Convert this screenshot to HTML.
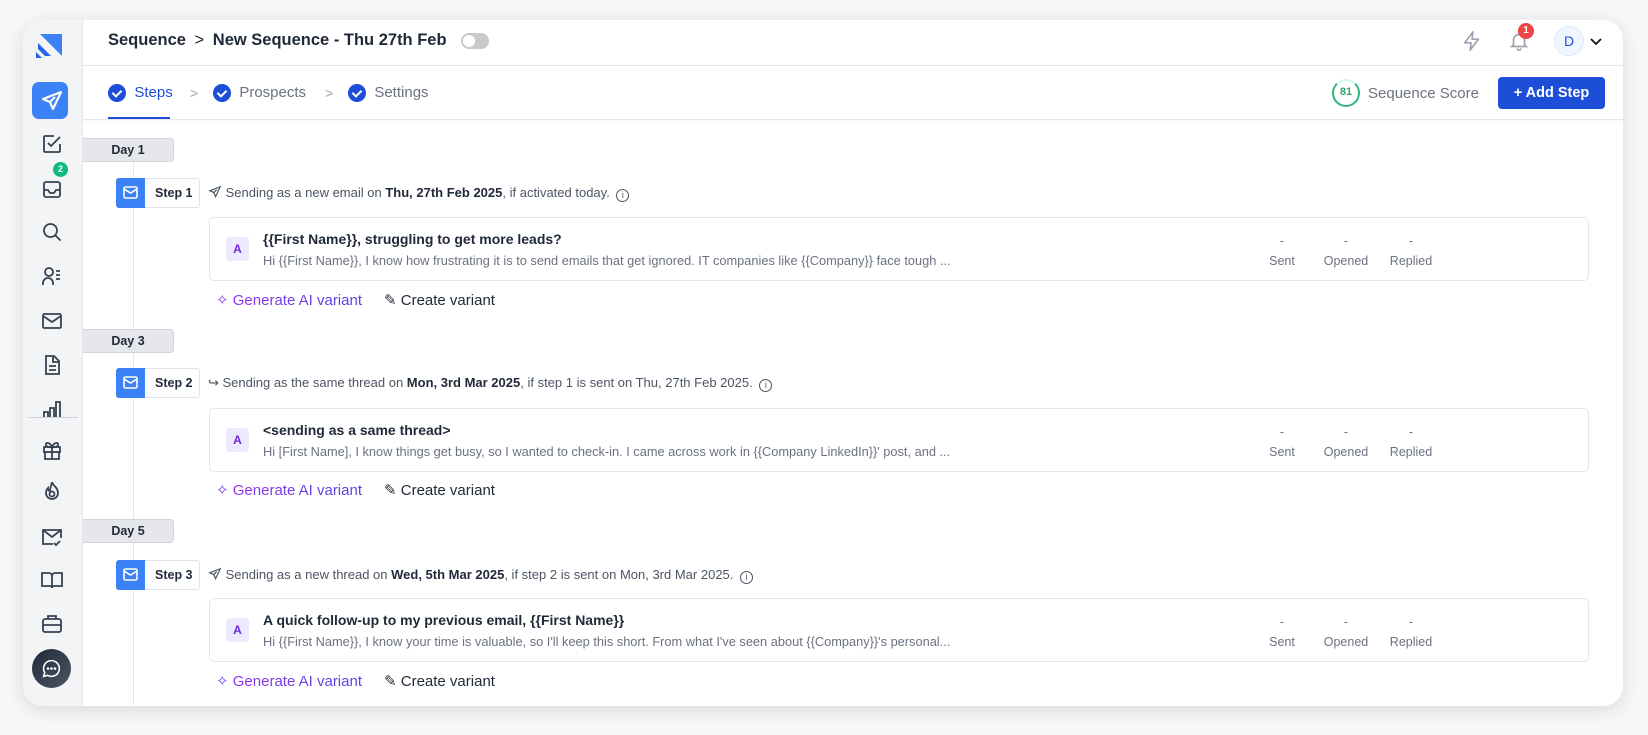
<!DOCTYPE html>
<html><head><meta charset="utf-8"><style>
*{box-sizing:border-box;margin:0;padding:0}
body{width:1648px;height:735px;background:#f7f7f8;font-family:"Liberation Sans",sans-serif;position:relative;overflow:hidden;color:#1f2937}
.win{position:absolute;left:23px;top:20px;width:1600px;height:686px;background:#fff;border-radius:20px;box-shadow:0 4px 18px rgba(0,0,0,.12);overflow:hidden}
.side{position:absolute;left:0;top:0;width:60px;height:100%;background:#f3f4f6;border-right:1px solid #e5e7eb}
.ico{position:absolute;left:17px;width:24px;height:24px}
.abs{position:absolute}
.hdr{position:absolute;left:60px;right:0;top:0;height:46px;border-bottom:1px solid #e5e7eb}
.tabs{position:absolute;left:60px;right:0;top:46px;height:54px;border-bottom:1px solid #e5e7eb;box-shadow:0 2px 4px rgba(0,0,0,.04)}
.chk{display:inline-block;width:18px;height:18px;border-radius:50%;background:#1d4ed8;vertical-align:middle;position:relative}
.chk:after{content:"";position:absolute;left:6px;top:4px;width:4px;height:7px;border:solid #fff;border-width:0 2px 2px 0;transform:rotate(45deg)}
.day{position:absolute;left:60px;width:91px;height:24px;background:#e5e7eb;border:1px solid #d1d5db;border-left:none;border-radius:0 4px 4px 0;font-size:12.5px;font-weight:bold;text-align:center;line-height:22px;color:#1f2937}
.chip{position:absolute;left:93px;height:30px;width:84px;border:1px solid #dbe3ef;border-radius:3px;background:#fff;font-size:12.5px;font-weight:bold;line-height:28px;padding-left:38px;color:#1f2937}
.chip .m{position:absolute;left:-1px;top:-1px;width:29px;height:30px;background:#3b82f6;border-radius:3px 0 0 3px}
.meta{position:absolute;left:185px;font-size:13px;color:#4b5563;line-height:16px}
.meta b{color:#1f2937}
.inf{display:inline-block;width:13px;height:13px;border:1.3px solid #4b5563;border-radius:50%;font-size:9px;text-align:center;line-height:11px;vertical-align:-1px;margin-left:3px}
.card{position:absolute;left:186px;width:1380px;height:64px;border:1px solid #e5e7eb;border-radius:5px;background:#fff}
.av{position:absolute;left:16px;top:19px;width:23px;height:24px;background:#ede9fe;border-radius:4px;color:#6d28d9;font-size:12px;font-weight:bold;text-align:center;line-height:24px}
.tt{position:absolute;left:53px;top:13px;font-size:14px;font-weight:bold;color:#1f2937}
.pv{position:absolute;left:53px;top:35px;font-size:12.8px;color:#6b7280}
.st{position:absolute;top:13px;width:70px;text-align:center;font-size:12.5px;color:#6b7280;line-height:20px}
.gen{position:absolute;left:193px;font-size:15px;line-height:18px}
.gen .g{background:linear-gradient(90deg,#9333ea,#4f46e5);-webkit-background-clip:text;color:transparent}
.gen .c{color:#1f2937;margin-left:22px}
</style></head><body>
<div class="win">
<div class="side">
 <svg class="abs" style="left:13px;top:10px" width="30" height="30" viewBox="0 0 30 30"><path d="M4 4h22v22z" fill="#3b82f6"/><path d="M2 13l13 13H9L2 19z" fill="#2563eb"/><path d="M0 22l6 6H0z" fill="#2563eb"/></svg>
 <div class="abs" style="left:9px;top:62px;width:36px;height:37px;background:#3b82f6;border-radius:7px"></div>
 <svg class="ico" style="top:69px" viewBox="0 0 24 24" fill="none" stroke="#fff" stroke-width="2.2" stroke-linejoin="round"><path d="M21 3L3 10l7 3 3 7z"/><path d="M10 13l5-5"/></svg>
 <svg class="ico" style="top:112px" viewBox="0 0 24 24" fill="none" stroke="#374151" stroke-width="1.8"><path d="M20 12v7a1 1 0 0 1-1 1H5a1 1 0 0 1-1-1V5a1 1 0 0 1 1-1h9"/><path d="M8 11l3 3 9-9"/></svg>
 <svg class="ico" style="top:157px" viewBox="0 0 24 24" fill="none" stroke="#374151" stroke-width="1.8"><rect x="4" y="5" width="16" height="15" rx="2"/><path d="M4 13h4l2 3h4l2-3h4"/></svg>
 <div class="abs" style="left:30px;top:142px;width:15px;height:15px;border-radius:50%;background:#10b981;color:#fff;font-size:9px;font-weight:bold;text-align:center;line-height:15px">2</div>
 <svg class="ico" style="top:200px" viewBox="0 0 24 24" fill="none" stroke="#374151" stroke-width="1.8"><circle cx="10.5" cy="10.5" r="6.5"/><path d="M15.5 15.5l5 5"/></svg>
 <svg class="ico" style="top:244px" viewBox="0 0 24 24" fill="none" stroke="#374151" stroke-width="1.8"><circle cx="9" cy="8" r="4"/><path d="M3 21v-2a5 5 0 0 1 10 0v2M16 7h4M16 11h4M16 15h4"/></svg>
 <svg class="ico" style="top:289px" viewBox="0 0 24 24" fill="none" stroke="#374151" stroke-width="1.8"><rect x="3" y="5" width="18" height="14" rx="1.5"/><path d="M3 7l9 6 9-6"/></svg>
 <svg class="ico" style="top:333px" viewBox="0 0 24 24" fill="none" stroke="#374151" stroke-width="1.8"><path d="M6 3h8l5 5v13H6z"/><path d="M13 3v6h6M9 13h7M9 17h7"/></svg>
 <svg class="ico" style="top:377px" viewBox="0 0 24 24" fill="none" stroke="#374151" stroke-width="1.8"><path d="M4 21v-6h4v6M10 21V11h4v10M16 21V5h4v16"/></svg>
 <div class="abs" style="left:5px;top:397px;width:50px;height:1px;background:#d1d5db"></div>
 <svg class="ico" style="top:418px" viewBox="0 0 24 24" fill="none" stroke="#374151" stroke-width="1.8"><rect x="4" y="9" width="16" height="5"/><path d="M5 14v7h14v-7M12 9v12M12 9c-2-5-7-5-6-2s6 2 6 2c2-5 7-5 6-2s-6 2-6 2"/></svg>
 <svg class="ico" style="top:459px" viewBox="0 0 24 24" fill="none" stroke="#374151" stroke-width="1.8"><path d="M12 3c0 3 6 5 6 11a6 6 0 0 1-12 0c0-3 2-5 2-5 0 2 1 3 2 3 0-4 2-7 2-9z"/><circle cx="12" cy="15" r="2.5"/></svg>
 <svg class="ico" style="top:505px" viewBox="0 0 24 24" fill="none" stroke="#374151" stroke-width="1.8"><path d="M13 19H3V5h18v8"/><path d="M3 5l9 7 9-7M14 18l2 2 4-4"/></svg>
 <svg class="ico" style="top:548px" viewBox="0 0 24 24" fill="none" stroke="#374151" stroke-width="1.8"><path d="M2 5h7a3 3 0 0 1 3 3v12a2 2 0 0 0-2-2H2zM22 5h-7a3 3 0 0 0-3 3v12a2 2 0 0 1 2-2h8z"/></svg>
 <svg class="ico" style="top:592px" viewBox="0 0 24 24" fill="none" stroke="#374151" stroke-width="1.8"><rect x="3" y="7" width="18" height="13" rx="2"/><path d="M8 7V4h8v3M3 13h18"/></svg>
 <div class="abs" style="left:9px;top:629px;width:39px;height:39px;border-radius:50%;background:linear-gradient(135deg,#1f2937,#4b5563)"></div>
 <svg class="abs" style="left:18px;top:638px" width="21" height="21" viewBox="0 0 24 24" fill="none" stroke="#fff" stroke-width="1.8"><path d="M12 3a9 9 0 1 1-4.5 16.8L3 21l1.3-4.3A9 9 0 0 1 12 3z"/><circle cx="8" cy="12" r=".6" fill="#fff"/><circle cx="12" cy="12" r=".6" fill="#fff"/><circle cx="16" cy="12" r=".6" fill="#fff"/></svg>
</div>

<div class="hdr">
 <div class="abs" style="left:25px;top:11px;font-size:16.5px;color:#1f2937;font-weight:bold"><span>Sequence</span> <span style="font-weight:normal;margin:0 4px">&gt;</span> New Sequence - Thu 27th Feb</div>
 <div class="abs" style="left:378px;top:13px;width:28px;height:16px;border-radius:8px;background:#c7c9cd"></div>
 <div class="abs" style="left:380px;top:15px;width:12px;height:12px;border-radius:50%;background:#fff"></div>
 <svg class="abs" style="left:1378px;top:10px" width="22" height="22" viewBox="0 0 24 24" fill="none" stroke="#9ca3af" stroke-width="1.8" stroke-linejoin="round"><path d="M13 2L4 14h7l-1 8 9-12h-7z"/></svg>
 <svg class="abs" style="left:1425px;top:10px" width="22" height="22" viewBox="0 0 24 24" fill="none" stroke="#9ca3af" stroke-width="1.8"><path d="M6 16V11a6 6 0 0 1 12 0v5l2 2H4z"/><path d="M10 20a2 2 0 0 0 4 0"/></svg>
 <div class="abs" style="left:1435px;top:3px;width:16px;height:16px;border-radius:50%;background:#ef4444;color:#fff;font-size:10px;font-weight:bold;text-align:center;line-height:16px">1</div>
 <div class="abs" style="left:1471px;top:6px;width:30px;height:30px;border-radius:50%;background:#eff6ff;border:1px solid #dbeafe;color:#1d4ed8;font-size:14px;text-align:center;line-height:28px">D</div>
 <svg class="abs" style="left:1505px;top:13px" width="16" height="16" viewBox="0 0 16 16" fill="none" stroke="#111" stroke-width="1.8"><path d="M3 6l5 5 5-5"/></svg>
</div>

<div class="tabs">
 <div class="abs" style="left:25px;top:18px;font-size:15px;color:#1d4ed8"><span class="chk"></span>&nbsp; Steps</div>
 <div class="abs" style="left:25px;top:51px;width:62px;height:2px;background:#1d4ed8"></div>
 <div class="abs" style="left:107px;top:19px;font-size:14px;color:#9ca3af">&gt;</div>
 <div class="abs" style="left:130px;top:18px;font-size:15px;color:#6b7280"><span class="chk"></span>&nbsp; Prospects</div>
 <div class="abs" style="left:242px;top:19px;font-size:14px;color:#9ca3af">&gt;</div>
 <div class="abs" style="left:265px;top:18px;font-size:15px;color:#6b7280"><span class="chk"></span>&nbsp; Settings</div>
 <div class="abs" style="left:1249px;top:13px;width:28px;height:28px;border-radius:50%;border:2.5px solid #34b27b;border-top-color:#d1fae5;color:#34a06f;font-size:11px;font-weight:bold;text-align:center;line-height:23px">81</div>
 <div class="abs" style="left:1285px;top:19px;font-size:15px;color:#6b7280">Sequence Score</div>
 <div class="abs" style="left:1415px;top:11px;width:107px;height:32px;border-radius:4px;background:#1d4ed8;color:#fff;font-size:14.5px;font-weight:bold;text-align:center;line-height:32px">+ Add Step</div>
</div>

<div class="abs" style="left:110px;top:142px;width:1px;height:544px;background:#e5e7eb"></div>

<!-- step 1 -->
<div class="day" style="top:118px">Day 1</div>
<div class="chip" style="top:158px"><div class="m"><svg style="margin:8px 0 0 7px;display:block" width="15" height="13" viewBox="0 0 15 13" fill="none" stroke="#fff" stroke-width="1.6"><rect x="1" y="1" width="13" height="11" rx="1.5"/><path d="M1 3l6.5 4L14 3"/></svg></div>Step 1</div>
<div class="meta" style="top:165px"><svg width="14" height="14" viewBox="0 0 24 24" fill="none" stroke="#4b5563" stroke-width="2" style="vertical-align:-2px"><path d="M21 3L3 10l7 3 3 7z"/><path d="M10 13l5-5"/></svg> Sending as a new email on <b>Thu, 27th Feb 2025</b>, if activated today. <span class="inf">i</span></div>
<div class="card" style="top:197px"><div class="av">A</div><div class="tt">{{First Name}}, struggling to get more leads?</div><div class="pv">Hi {{First Name}}, I know how frustrating it is to send emails that get ignored. IT companies like {{Company}} face tough ...</div>
<div class="st" style="left:1037px">-<br>Sent</div><div class="st" style="left:1101px">-<br>Opened</div><div class="st" style="left:1166px">-<br>Replied</div></div>
<div class="gen" style="top:272px"><span style="color:#7c3aed">✧</span> <span class="g">Generate AI variant</span><span class="c">✎ Create variant</span></div>

<!-- step 2 -->
<div class="day" style="top:309px">Day 3</div>
<div class="chip" style="top:348px"><div class="m"><svg style="margin:8px 0 0 7px;display:block" width="15" height="13" viewBox="0 0 15 13" fill="none" stroke="#fff" stroke-width="1.6"><rect x="1" y="1" width="13" height="11" rx="1.5"/><path d="M1 3l6.5 4L14 3"/></svg></div>Step 2</div>
<div class="meta" style="top:355px">↪ Sending as the same thread on <b>Mon, 3rd Mar 2025</b>, if step 1 is sent on Thu, 27th Feb 2025. <span class="inf">i</span></div>
<div class="card" style="top:388px"><div class="av">A</div><div class="tt">&lt;sending as a same thread&gt;</div><div class="pv">Hi [First Name], I know things get busy, so I wanted to check-in. I came across work in {{Company LinkedIn}}' post, and ...</div>
<div class="st" style="left:1037px">-<br>Sent</div><div class="st" style="left:1101px">-<br>Opened</div><div class="st" style="left:1166px">-<br>Replied</div></div>
<div class="gen" style="top:462px"><span style="color:#7c3aed">✧</span> <span class="g">Generate AI variant</span><span class="c">✎ Create variant</span></div>

<!-- step 3 -->
<div class="day" style="top:499px">Day 5</div>
<div class="chip" style="top:540px"><div class="m"><svg style="margin:8px 0 0 7px;display:block" width="15" height="13" viewBox="0 0 15 13" fill="none" stroke="#fff" stroke-width="1.6"><rect x="1" y="1" width="13" height="11" rx="1.5"/><path d="M1 3l6.5 4L14 3"/></svg></div>Step 3</div>
<div class="meta" style="top:547px"><svg width="14" height="14" viewBox="0 0 24 24" fill="none" stroke="#4b5563" stroke-width="2" style="vertical-align:-2px"><path d="M21 3L3 10l7 3 3 7z"/><path d="M10 13l5-5"/></svg> Sending as a new thread on <b>Wed, 5th Mar 2025</b>, if step 2 is sent on Mon, 3rd Mar 2025. <span class="inf">i</span></div>
<div class="card" style="top:578px"><div class="av">A</div><div class="tt">A quick follow-up to my previous email, {{First Name}}</div><div class="pv">Hi {{First Name}}, I know your time is valuable, so I'll keep this short. From what I've seen about {{Company}}'s personal...</div>
<div class="st" style="left:1037px">-<br>Sent</div><div class="st" style="left:1101px">-<br>Opened</div><div class="st" style="left:1166px">-<br>Replied</div></div>
<div class="gen" style="top:653px"><span style="color:#7c3aed">✧</span> <span class="g">Generate AI variant</span><span class="c">✎ Create variant</span></div>
</div>
</body></html>
